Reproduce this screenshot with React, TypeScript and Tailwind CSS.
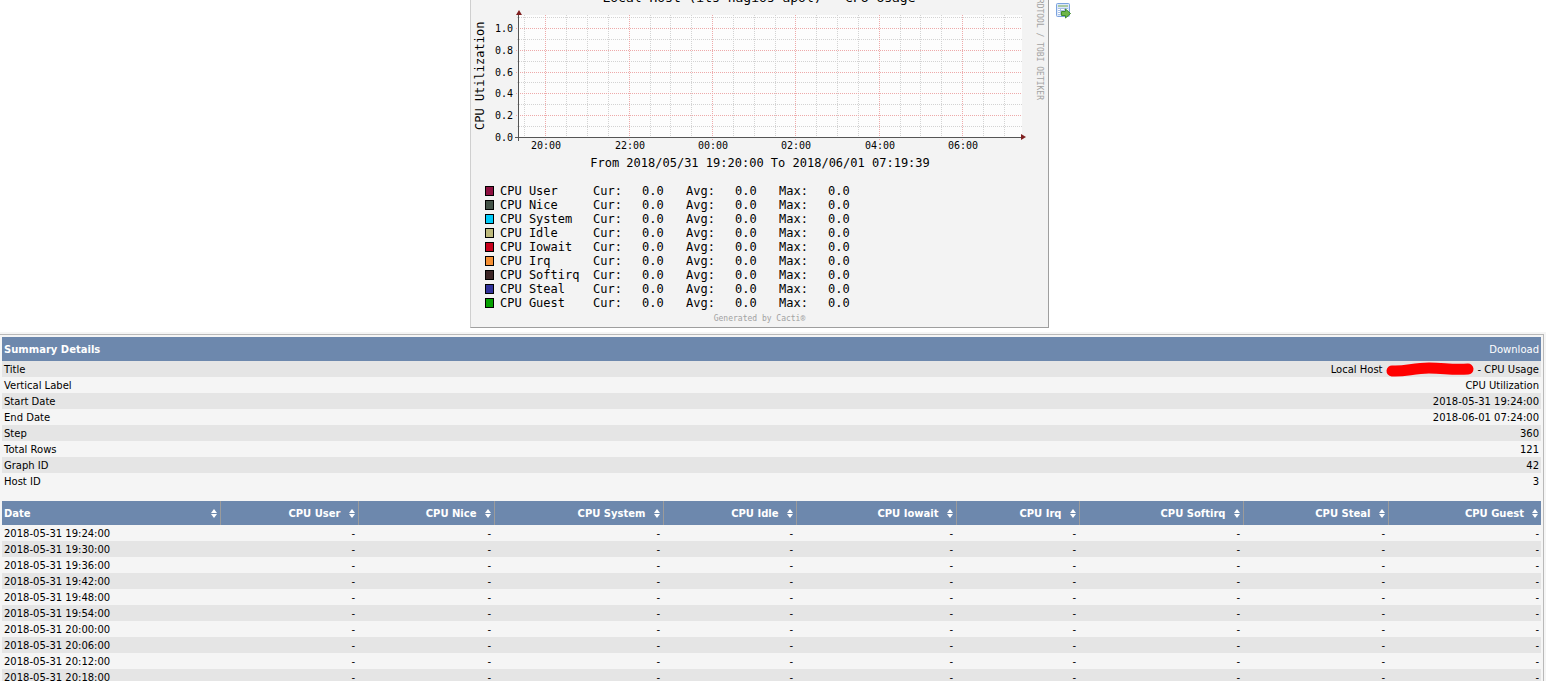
import { FC } from 'react';

interface LegendItem {
    label: string;
    color: string;
}

interface Column {
    label: string;
    width: string;
}

const legend: LegendItem[] = [
    { label: 'CPU User', color: 'bg-[#8d1040]' },
    { label: 'CPU Nice', color: 'bg-[#435247]' },
    { label: 'CPU System', color: 'bg-[#00cbf9]' },
    { label: 'CPU Idle', color: 'bg-[#bdb97c]' },
    { label: 'CPU Iowait', color: 'bg-[#c7001b]' },
    { label: 'CPU Irq', color: 'bg-[#f58f33]' },
    { label: 'CPU Softirq', color: 'bg-[#3d2626]' },
    { label: 'CPU Steal', color: 'bg-[#30329b]' },
    { label: 'CPU Guest', color: 'bg-[#05a000]' },
];

const columns: Column[] = [
    { label: 'Date', width: 'w-[218px]' },
    { label: 'CPU User', width: 'w-[138px]' },
    { label: 'CPU Nice', width: 'w-[136px]' },
    { label: 'CPU System', width: 'w-[169px]' },
    { label: 'CPU Idle', width: 'w-[133px]' },
    { label: 'CPU Iowait', width: 'w-[160px]' },
    { label: 'CPU Irq', width: 'w-[123px]' },
    { label: 'CPU Softirq', width: 'w-[164px]' },
    { label: 'CPU Steal', width: 'w-[145px]' },
    { label: 'CPU Guest', width: 'w-[153px]' },
];

const dates = [
    '2018-05-31 19:24:00',
    '2018-05-31 19:30:00',
    '2018-05-31 19:36:00',
    '2018-05-31 19:42:00',
    '2018-05-31 19:48:00',
    '2018-05-31 19:54:00',
    '2018-05-31 20:00:00',
    '2018-05-31 20:06:00',
    '2018-05-31 20:12:00',
    '2018-05-31 20:18:00',
];

const hours = [
    { x: 75, label: '20:00' },
    { x: 159, label: '22:00' },
    { x: 242, label: '00:00' },
    { x: 325, label: '02:00' },
    { x: 409, label: '04:00' },
    { x: 492, label: '06:00' },
];
const minorX = [54, 96, 117, 138, 180, 200, 221, 263, 284, 305, 346, 367, 388, 430, 450, 471, 513, 534];

const levels = [
    { y: 28, label: '1.0' },
    { y: 50, label: '0.8' },
    { y: 72, label: '0.6' },
    { y: 93, label: '0.4' },
    { y: 115, label: '0.2' },
];
const minorY = [17, 39, 61, 82, 104, 126];

const Plot: FC = () => (
    <svg
        width="577"
        height="184"
        viewBox="1 0 577 184"
        className="block font-['DejaVu_Sans_Mono',monospace]"
    >
        <text x="289" y="2" fontSize="13" textAnchor="middle">
            Local Host (its-nagios-apol) - CPU Usage
        </text>
        <rect x="49" y="15" width="503" height="122" fill="#fdfdfd" />
        <g shapeRendering="crispEdges" strokeDasharray="1 1">
            {minorX.map((x) => (
                <path key={x} d={`M${x}.5 15V139`} stroke="#d3d3d3" />
            ))}
            {minorY.map((y) => (
                <path key={y} d={`M47 ${y}.5H552`} stroke="#d3d3d3" />
            ))}
            {hours.map(({ x }) => (
                <path key={x} d={`M${x}.5 15V140`} stroke="#eeaaaa" />
            ))}
            {levels.map(({ y }) => (
                <path key={y} d={`M46 ${y}.5H552`} stroke="#eeaaaa" />
            ))}
        </g>
        <g shapeRendering="crispEdges" stroke="#555">
            <path d="M45 137.5H554" />
            <path d="M48.5 14V141" />
        </g>
        <path d="M46 15h6l-3-5z" fill="#802020" />
        <path d="M551 134v6l5-3z" fill="#802020" />
        <g fontSize="10">
            {levels.map(({ y, label }) => (
                <text key={label} x="43" y={y + 4} textAnchor="end">
                    {label}
                </text>
            ))}
            <text x="43" y="141" textAnchor="end">
                0.0
            </text>
            {hours.map(({ x, label }) => (
                <text key={label} x={x + 1} y="149" textAnchor="middle">
                    {label}
                </text>
            ))}
        </g>
        <text transform="translate(14 130) rotate(-90)" fontSize="12">
            CPU Utilization
        </text>
        <text
            transform="translate(567 100) rotate(90)"
            fontSize="8"
            fill="#a2a2a2"
            textAnchor="end"
        >
            RRDTOOL / TOBI OETIKER
        </text>
        <text x="290" y="167" fontSize="12" textAnchor="middle">
            From 2018/05/31 19:20:00 To 2018/06/01 07:19:39
        </text>
    </svg>
);

const Legend: FC = () => (
    <table className="ml-[14px] table-fixed w-[387px] text-[12px] leading-[14px] text-left">
        <tbody>
            {legend.map(({ label, color }) => (
                <tr key={label} className="h-[14px]">
                    <th className="w-[108px] p-0 font-normal">
                        <div className="flex items-center gap-[6px] h-[14px]">
                            <span className={`w-[9px] h-[10px] border border-black ${color}`} />
                            {label}
                        </div>
                    </th>
                    {['Cur:', 'Avg:', 'Max:'].map((name) => (
                        <td key={name} className="p-0">
                            <div className="flex h-[14px]">
                                <span className="w-[49px]">{name}</span>
                                <span>0.0</span>
                            </div>
                        </td>
                    ))}
                </tr>
            ))}
        </tbody>
    </table>
);

const ExportIcon: FC = () => (
    <svg width="16" height="17" viewBox="0 0 16 17" className="block">
        <rect x="0.5" y="1.5" width="13" height="13" rx="1" fill="#dce8fa" stroke="#7ba3df" />
        <rect x="2" y="3" width="10" height="2" fill="#a9c9a4" />
        <rect x="2" y="6" width="10" height="7" fill="#fff" />
        <path d="M2 6.5h10M2 8.5h10M2 10.5h10M2 12.5h10M4.5 6v7M8.5 6v7" stroke="#a9c0e4" />
        <path d="M5.5 9.5h4v-2.500l5 4.500-5 4.500v-2.500h-4z" fill="#6db54a" stroke="#3f8a2e" />
    </svg>
);

const SortIcon: FC = () => (
    <svg width="6" height="9" viewBox="0 0 6 9" className="block">
        <path d="M0 4h6L3 0zM0 5h6L3 9z" fill="#fff" />
    </svg>
);

// Hides the host name in the title row
const Redaction: FC = () => (
    <svg width="91" height="14" viewBox="0 0 91 14" className="block mx-[2px] overflow-visible">
        <path
            d="M7 8C20 9 28 5 44 5S65 7 83 6"
            fill="none"
            stroke="#f00"
            strokeWidth="11"
            strokeLinecap="round"
        />
    </svg>
);

const summary = [
    { name: 'Title', value: null },
    { name: 'Vertical Label', value: 'CPU Utilization' },
    { name: 'Start Date', value: '2018-05-31 19:24:00' },
    { name: 'End Date', value: '2018-06-01 07:24:00' },
    { name: 'Step', value: '360' },
    { name: 'Total Rows', value: '121' },
    { name: 'Graph ID', value: '42' },
    { name: 'Host ID', value: '3' },
];

const SummaryTable: FC = () => (
    <table className="w-full">
        <thead>
            <tr className="h-6 bg-[#6d88ad] text-white">
                <th className="px-[2px] pt-[2px] pb-0 text-left font-bold">Summary Details</th>
                <td className="px-[2px] pt-[2px] pb-0 text-right">
                    <a href="#download">Download</a>
                </td>
            </tr>
        </thead>
        <tbody>
            {summary.map(({ name, value }) => (
                <tr key={name} className="h-4 odd:bg-[#e5e5e5]">
                    <th className="px-[2px] pt-[2px] pb-0 text-left font-normal">{name}</th>
                    <td className="px-[2px] pt-[2px] pb-0 text-right">
                        {value ?? (
                            <div className="flex items-center justify-end h-[14px]">
                                Local Host <Redaction /> - CPU Usage
                            </div>
                        )}
                    </td>
                </tr>
            ))}
        </tbody>
    </table>
);

const DataTable: FC = () => (
    <table className="w-full mt-3 table-fixed">
        <thead>
            <tr className="h-6 bg-[#6d88ad] text-white">
                {columns.map(({ label, width }, i) => (
                    <th
                        key={label}
                        className={`p-0 border-r border-[#9b9b9b] last:border-r-0 ${width}`}
                    >
                        <button
                            type="button"
                            className={`flex items-center w-full h-6 gap-2 pt-px pl-[2px] pr-[3px] font-bold ${
                                i === 0 ? 'justify-between' : 'justify-end'
                            }`}
                        >
                            {label}
                            <SortIcon />
                        </button>
                    </th>
                ))}
            </tr>
        </thead>
        <tbody>
            {dates.map((date) => (
                <tr key={date} className="h-4 even:bg-[#e5e5e5]">
                    <td className="px-[2px] pt-[2px] pb-0">{date}</td>
                    {columns.slice(1).map(({ label }) => (
                        <td
                            key={label}
                            className="pl-[2px] pr-[3px] last:pr-[2px] pt-[2px] pb-0 text-right"
                        >
                            -
                        </td>
                    ))}
                </tr>
            ))}
        </tbody>
    </table>
);

const App: FC = () => {
    return (
        <div className="h-screen overflow-hidden bg-white text-black pr-[2px] font-['DejaVu_Sans',sans-serif] text-[10px] leading-[14px]">
            <div className="flex justify-center gap-[7px] pr-1">
                <div className="border border-t-0 border-l-[#cfcfcf] border-r-[#9e9e9e] border-b-[#9e9e9e] bg-[#f3f3f3] font-['DejaVu_Sans_Mono',monospace]">
                    <Plot />
                    <Legend />
                    <p className="pt-[2px] pb-px text-center text-[8px] leading-[14px] text-[#a2a2a2]">
                        Generated by Cacti®
                    </p>
                </div>
                <a href="#export" aria-label="CSV Export" className="mt-[2px] h-4">
                    <ExportIcon />
                </a>
            </div>
            <div className="mt-1 pt-[2px] pr-[2px] bg-[#f5f5f5]">
                <div className="border border-l-0 border-[#b9b9b9] p-[2px] pr-[2px]">
                    <SummaryTable />
                    <DataTable />
                </div>
            </div>
        </div>
    );
};

export default App;
